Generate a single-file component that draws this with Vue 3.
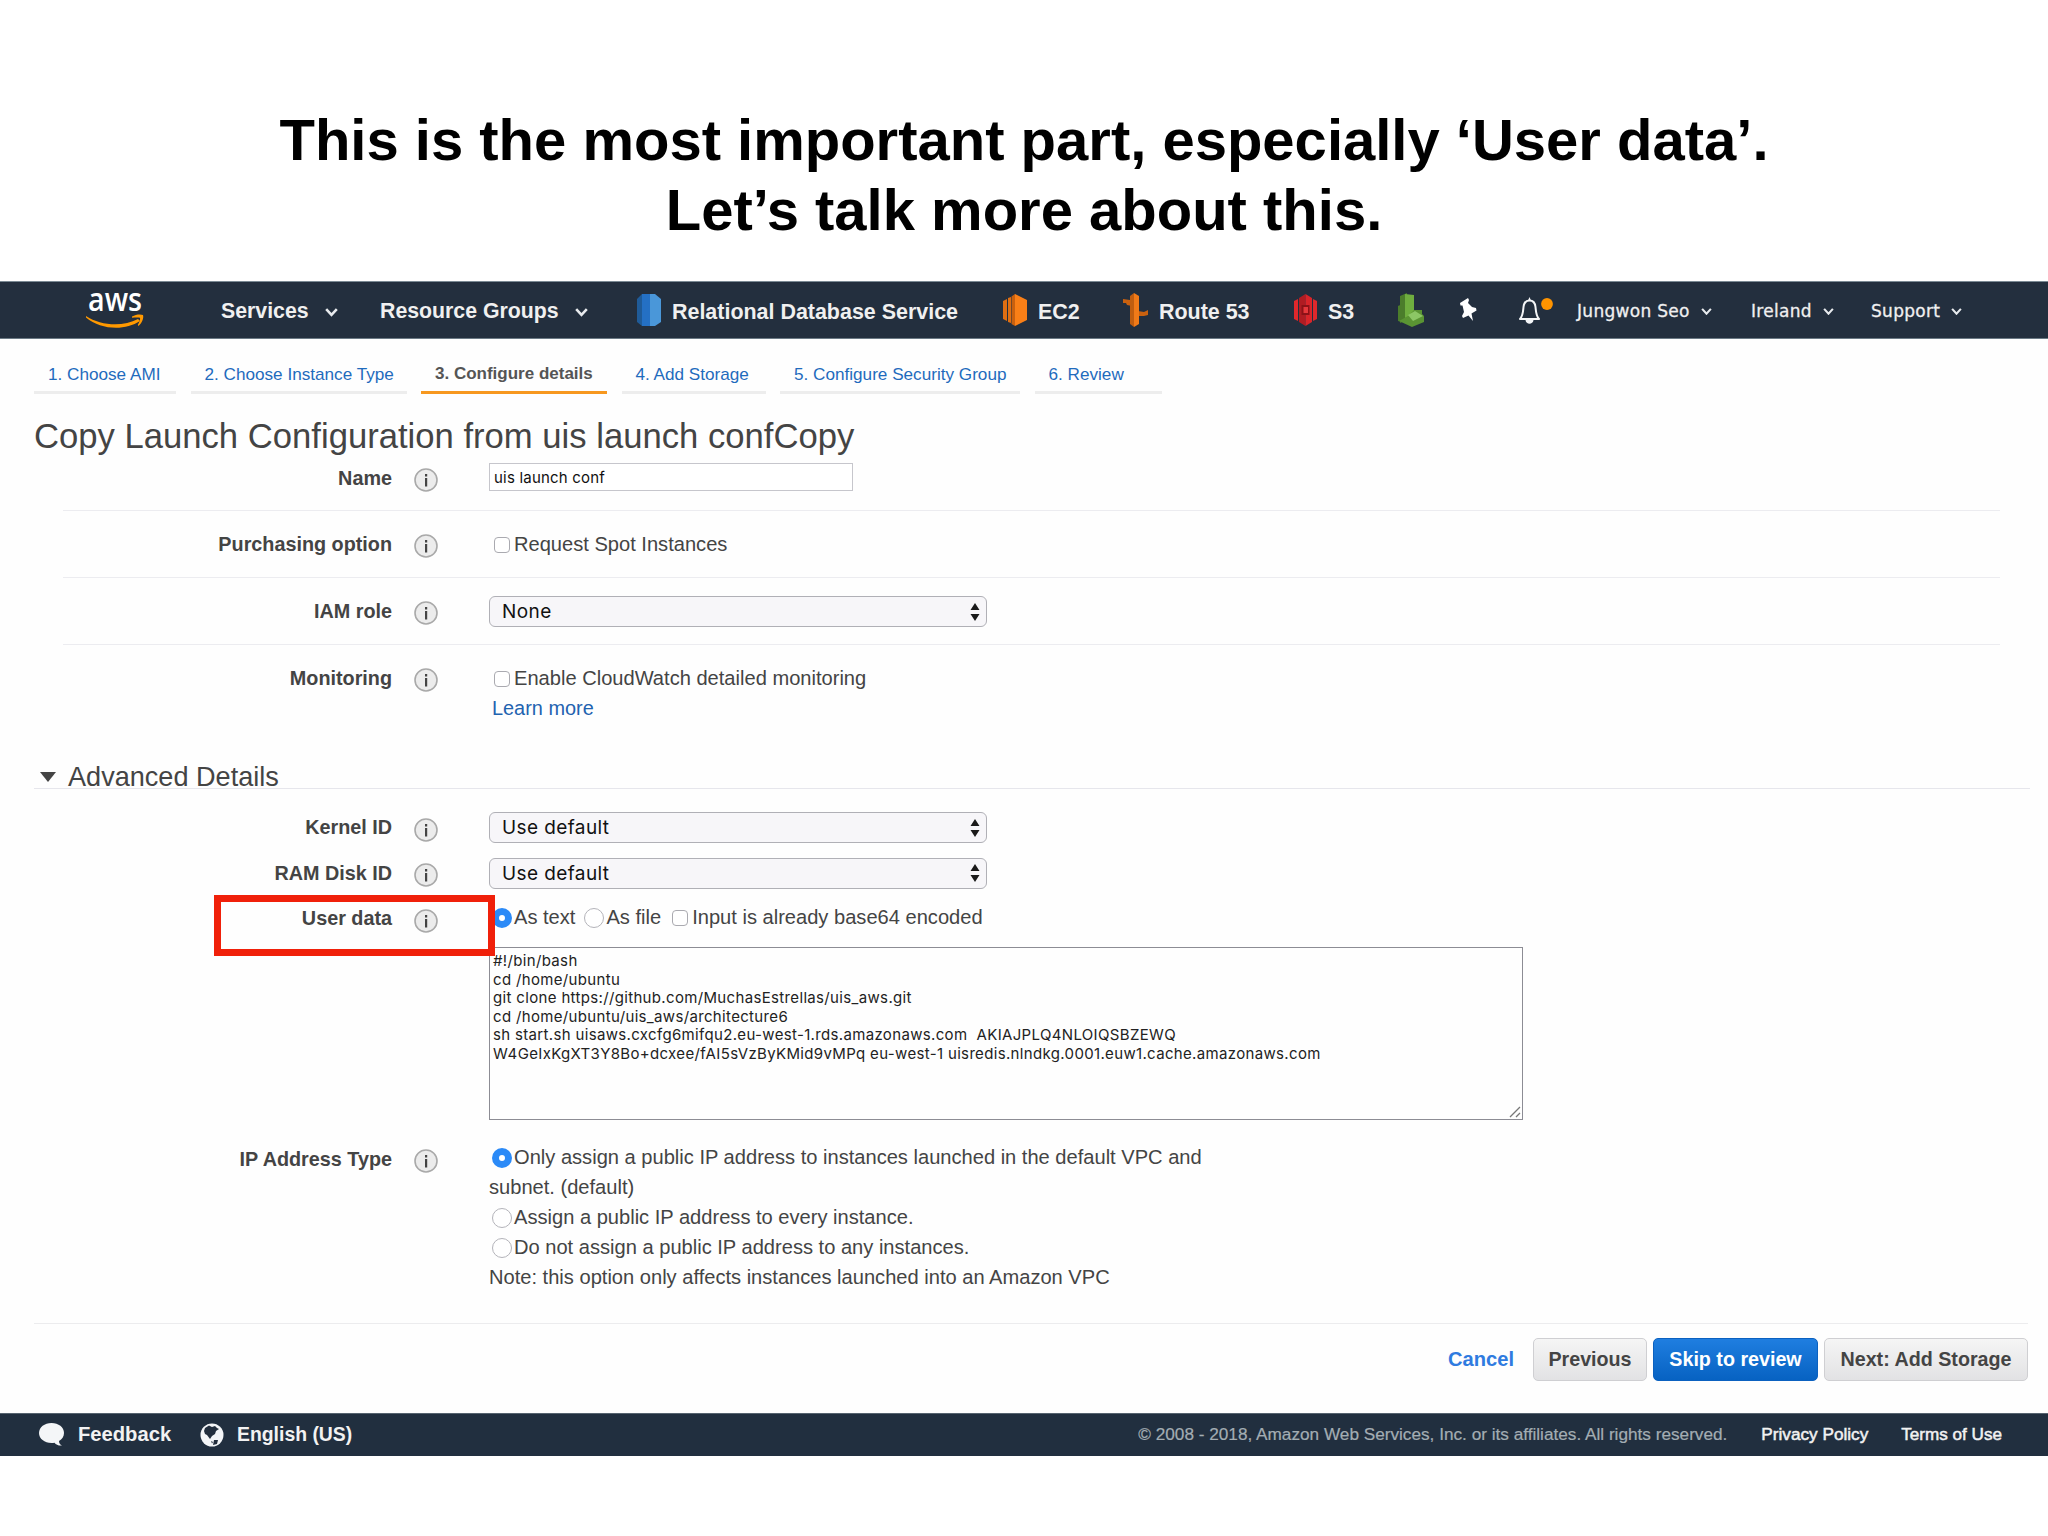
<template>
  <div class="slide">
    <h1 class="slide-title">This is the most important part, especially ‘User data’.<br />Let’s talk more about this.</h1>

    <header class="nav">
      <svg class="logo" viewBox="0 0 62 48" width="62" height="48">
        <text x="3" y="28.5" textLength="54" lengthAdjust="spacingAndGlyphs" class="logo-text">aws</text>
        <path d="M1 34 C16 44 38 45 53 37 L55 39 C40 49 16 48 1 35.5 Z" fill="#ff9900" />
        <path d="M47 34.500 C51 32 56 32 58 33 C59 36 57 41 53.500 44 L52.800 43 C54.500 40 55.500 37 55 35.800 C53 35.200 50 35.600 47 35.800 Z" fill="#ff9900" />
      </svg>
      <div class="nav-item">Services<Caret class="caret" /></div>
      <div class="nav-item">Resource Groups<Caret class="caret" /></div>
      <div class="nav-item shortcut">
        <svg viewBox="0 0 24 34" width="24" height="34">
          <path d="M0 6 L5 1 V33 L0 29 Z" fill="#1f5b98" />
          <path d="M5 1 H13 V33 H5 Z" fill="#2470c4" />
          <path d="M13 1 H18 L24 6 V29 L18 33 H13 Z" fill="#4a97d9" />
        </svg>
        Relational Database Service
      </div>
      <div class="nav-item shortcut">
        <svg viewBox="0 0 24 32" width="24" height="32">
          <path d="M0 7 L4 5 V27 L0 25 Z M5 4 L8 3 V29 L5 28 Z" fill="#e06f12" />
          <path d="M8.500 2.500 L12 0 V32 L8.500 30 Z" fill="#c9600e" />
          <path d="M12 0 L24 6 V26 L12 32 Z" fill="#f97f17" />
        </svg>
        EC2
      </div>
      <div class="nav-item shortcut">
        <svg viewBox="0 0 25 34" width="25" height="34">
          <path d="M0 6 L7 7 L9 13 L4 12 L3 10 L0 10 Z M15 18 L21 19 L25 17 V22 L21 23 H15 Z" fill="#c9610f" />
          <path d="M7 3 L11 0 V34 L7 31 V16 Z" fill="#c05e10" />
          <path d="M11 0 L16 3 V31 L11 34 Z" fill="#f07a18" />
        </svg>
        Route 53
      </div>
      <div class="nav-item shortcut">
        <svg viewBox="0 0 23 32" width="23" height="32">
          <path d="M0 7 L4 5 V27 L0 25 Z M19 5 L23 7 V25 L19 27 Z" fill="#e0282c" />
          <path d="M5 4 L11.500 0 V32 L5 28 Z" fill="#b01c22" />
          <path d="M11.500 0 L18 4 V28 L11.500 32 Z" fill="#d9252a" />
          <path d="M7.500 11 H15.500 V21 H7.500 Z" fill="#8c1217" />
          <path d="M9.500 13 H14 V19 H9.500 Z" fill="#e5383b" />
        </svg>
        S3
      </div>
      <div class="nav-item">
        <svg class="green" viewBox="0 0 26 34" width="26" height="34">
          <path d="M2 3 L9 0 V27 L2 30 Z M0 13 L4 11 V29 L0 28 Z" fill="#4b7d2b" />
          <path d="M7 1 L16 2 V22 L7 25 Z" fill="#6fae3f" />
          <path d="M16 17 L24 17 V21 L26 23 V29 L14 34 L1 28 L10 23 Z" fill="#5a9433" />
          <path d="M10 22 L17 18 L25 23 L15 28 Z" fill="#8cc665" />
        </svg>
      </div>
      <div class="nav-item">
        <svg class="pin" viewBox="0 0 18 24" width="18" height="24">
          <path d="M1 5 L9 0 L10 2 L9 5 L13 9 L17 10 L17.500 12.500 L12.500 15.500 L14 23 L9.500 17.500 L4 20 L3 18 L5 14 L3.500 7.500 L1.500 7.500 Z" fill="#fff" />
        </svg>
      </div>
      <div class="nav-item">
        <svg class="bell" viewBox="0 0 36 28" width="36" height="28">
          <path d="M2 22 C5 19 5 15 5.500 10 C6 5 8.500 3.500 11.500 3.500 C14.500 3.500 17 5 17.500 10 C18 15 18 19 21 22 Z" fill="none" stroke="#f4f6f8" stroke-width="2" stroke-linejoin="round" />
          <path d="M10 3.500 L11.500 0 L13 3.500 Z M7.500 23 H15.500 C15 28 8 28 7.500 23 Z" fill="#f4f6f8" />
          <circle cx="29" cy="7" r="5.900" fill="#ff9400" />
        </svg>
      </div>
      <div class="nav-item account">Jungwon Seo<Caret class="caret" /></div>
      <div class="nav-item account">Ireland<Caret class="caret" /></div>
      <div class="nav-item account">Support<Caret class="caret" /></div>
    </header>

    <main class="page">
      <nav class="tabs">
        <a v-for="tab in tabs" :key="tab" class="tab" :class="{ active: tab === activeTab }">{{ tab }}</a>
      </nav>

      <h2 class="heading">Copy Launch Configuration from uis launch confCopy</h2>

      <section class="basic">
        <div class="row name-row">
          <label class="label">Name</label>
          <InfoIcon class="info" />
          <div class="control"><div class="text-input">uis launch conf</div></div>
        </div>
        <div class="row">
          <label class="label">Purchasing option</label>
          <InfoIcon class="info" />
          <div class="control line"><span class="checkbox"></span>Request Spot Instances</div>
        </div>
        <div class="row">
          <label class="label">IAM role</label>
          <InfoIcon class="info" />
          <div class="control"><div class="select">None<Arrows class="arrows" /></div></div>
        </div>
        <div class="row last">
          <label class="label">Monitoring</label>
          <InfoIcon class="info" />
          <div class="control">
            <div class="line"><span class="checkbox"></span>Enable CloudWatch detailed monitoring</div>
            <a class="learn">Learn more</a>
          </div>
        </div>
      </section>

      <h3 class="advanced-title"><span class="triangle"></span>Advanced Details</h3>

      <section class="advanced">
        <div v-for="name in ['Kernel ID', 'RAM Disk ID']" :key="name" class="row">
          <label class="label">{{ name }}</label>
          <InfoIcon class="info" />
          <div class="control"><div class="select">Use default<Arrows class="arrows" /></div></div>
        </div>
        <div class="row user-row">
          <label class="label">User data</label>
          <InfoIcon class="info" />
          <div class="control">
            <div class="line user-choices">
              <span class="radio checked"></span><span class="choice">As text</span>
              <span class="radio"></span><span class="choice">As file</span>
              <span class="checkbox"></span>Input is already base64 encoded
            </div>
            <div class="textarea">
              <div v-for="line in userData" :key="line" class="code">{{ line }}</div>
              <svg class="grip" viewBox="0 0 12 12" width="12" height="12">
                <path d="M1 11 L11 1 M7 11 L11 7" stroke="#777" stroke-width="1.300" />
              </svg>
            </div>
          </div>
          <div class="highlight"></div>
        </div>
        <div class="row ip-row">
          <label class="label">IP Address Type</label>
          <InfoIcon class="info" />
          <div class="control options">
            <div class="line"><span class="radio checked"></span>Only assign a public IP address to instances launched in the default VPC and</div>
            <div class="line">subnet. (default)</div>
            <div class="line"><span class="radio"></span>Assign a public IP address to every instance.</div>
            <div class="line"><span class="radio"></span>Do not assign a public IP address to any instances.</div>
            <div class="line">Note: this option only affects instances launched into an Amazon VPC</div>
          </div>
        </div>
      </section>

      <div class="actions">
        <a class="cancel">Cancel</a>
        <button class="btn previous">Previous</button>
        <button class="btn primary">Skip to review</button>
        <button class="btn next">Next: Add Storage</button>
      </div>
    </main>

    <footer class="footer">
      <svg class="bubble" viewBox="0 0 25 23" width="25" height="23">
        <path d="M12.500 0 C19.500 0 25 4.300 25 10 C25 13.500 23 16.500 20 18 C20 20 21 21.500 23 22.500 C19.500 22.800 17 21.500 15.500 19.700 C7 21 0 16.500 0 10 C0 4.300 5.500 0 12.500 0 Z" fill="#f4f6f8" />
      </svg>
      <span class="feedback">Feedback</span>
      <svg class="globe" viewBox="0 0 24 24" width="24" height="24">
        <circle cx="12" cy="12" r="11.500" fill="#f4f6f8" />
        <path d="M5 5 L9 2.500 L12 4 L15 3 L17 5 L19 6 L16 8 L15 11 L12 13 L10 16 L7 12 L5 11 L4 8 Z M14 17 L18 17 L17 21 L13 22 Z M11 18 L13 19 L12 20.500 Z" fill="#232f3e" />
      </svg>
      <span class="language">English (US)</span>
      <span class="copyright">© 2008 - 2018, Amazon Web Services, Inc. or its affiliates. All rights reserved.</span>
      <a class="privacy">Privacy Policy</a>
      <a class="terms">Terms of Use</a>
    </footer>
  </div>
</template>

<script setup>
import { h } from 'vue'

const activeTab = '3. Configure details'
const tabs = [
  '1. Choose AMI',
  '2. Choose Instance Type',
  activeTab,
  '4. Add Storage',
  '5. Configure Security Group',
  '6. Review'
]

const userData = [
  '#!/bin/bash',
  'cd /home/ubuntu',
  'git clone https://github.com/MuchasEstrellas/uis_aws.git',
  'cd /home/ubuntu/uis_aws/architecture6',
  'sh start.sh uisaws.cxcfg6mifqu2.eu-west-1.rds.amazonaws.com  AKIAJPLQ4NLOIQSBZEWQ',
  'W4GeIxKgXT3Y8Bo+dcxee/fAI5sVzByKMid9vMPq eu-west-1 uisredis.nlndkg.0001.euw1.cache.amazonaws.com'
]

const Caret = () => h('svg', { viewBox: '0 0 12 8' }, [
  h('path', { d: 'M1 1 L6 6.500 L11 1', fill: 'none', stroke: '#e8ebee', 'stroke-width': 2.4 })
])

const Arrows = () => h('svg', { viewBox: '0 0 10 18' }, [
  h('path', { d: 'M5 0 L9.500 7 H0.500 Z M5 18 L0.500 11 H9.500 Z', fill: '#1a1a1a' })
])

const InfoIcon = () => h('svg', { viewBox: '0 0 24 24' }, [
  h('circle', { cx: 12, cy: 12, r: 11, fill: '#ececec', stroke: '#a9a9a9', 'stroke-width': 1.6 }),
  h('path', { d: 'M11 6 H13.200 V8.500 H11 Z M11 10 H13.200 V18.500 H11 Z', fill: '#444' })
])
</script>

<style>
body { margin: 0; background: #fff; }
</style>

<style scoped>
.slide { width: 2048px; height: 1536px; overflow: hidden; font-family: "Liberation Sans", Arial, sans-serif; font-size: 20.1px; color: #444; }
.slide-title { margin: 0; padding-top: 105px; height: 176px; font-size: 58px; line-height: 70px; font-weight: bold; text-align: center; color: #000; }

.nav {
  display: grid;
  grid-template-columns: 136px 159px 257px 366px 120px 171px 104px 61px 59px 59px 174px 120px 1fr;
  box-sizing: border-box;
  height: 58px;
  padding-left: 85px;
  background: #232f3e;
  border-top: 1px solid #7b8a94;
  border-bottom: 1px solid #6b7a85;
}
.logo { overflow: visible; }
.logo-text { font-family: "Open Sans", sans-serif; font-size: 32px; font-weight: 600; fill: #fff; }
.nav-item { display: flex; align-items: center; height: 58px; font-size: 21.3px; font-weight: bold; color: #f0f0f0; white-space: nowrap; }
.nav-item .caret { width: 13px; height: 8.500px; margin-left: 16px; margin-top: 3px; }
.shortcut { height: 61px; font-size: 21.45px; }
.shortcut svg { margin-right: 11px; margin-top: -5px; }
.green { margin-top: -3px; }
.pin { margin-top: -3px; }
.bell { margin-top: -1px; }
.account { height: 58px; font-family: "DejaVu Sans", Verdana, sans-serif; font-size: 17px; font-weight: normal; letter-spacing: 0.3px; -webkit-text-stroke: 0.3px #f0f0f0; }
.account .caret { width: 11px; height: 7px; margin-left: 11px; margin-top: 1px; }

.page { background: #fefefe; height: 1074px; overflow: hidden; }
.tabs { display: grid; grid-template-columns: 142px 216px 186px 144px 240px 127px; column-gap: 14.500px; margin: 18px 0 0 34px; }
.tab { padding-left: 14px; line-height: 34px; font-size: 17.15px; color: #1f6bbd; border-bottom: 3px solid #ededed; white-space: nowrap; }
.tab.active { font-size: 17px; color: #555; font-weight: bold; border-color: #f7981f; }

.heading { margin: 22px 0 0 34px; font-size: 34.65px; line-height: 40px; font-weight: normal; }

.row { position: relative; display: grid; grid-template-columns: 329px 97px 1fr; box-sizing: border-box; }
.basic { margin: 0 48px 0 63px; }
.basic .row { height: 67px; padding-top: 18px; border-bottom: 1.500px solid #ececf0; }
.basic .name-row { height: 55px; padding-top: 7px; }
.basic .last { height: 119px; border-bottom: 0; }
.label { font-size: 19.8px; font-weight: bold; line-height: 30px; text-align: right; white-space: nowrap; }
.info { width: 24px; height: 24px; margin: 5px 0 0 22px; }
.line { display: flex; align-items: center; height: 30px; white-space: nowrap; }
.learn { display: block; padding-left: 3px; font-size: 19.9px; line-height: 30px; color: #1f63b0; }

.text-input { box-sizing: border-box; width: 364px; height: 28px; padding-left: 4px; border: 1.500px solid #c6c6cc; background: #fff; font-family: Inter, sans-serif; font-size: 15px; letter-spacing: 0.2px; line-height: 27px; color: #111; }
.select { display: flex; align-items: center; justify-content: space-between; box-sizing: border-box; width: 498px; height: 31px; padding: 0 6px 0 12px; border: 1.500px solid #b0b0b6; border-radius: 6px; background: #f7f6f9; font-family: Inter, sans-serif; font-size: 19px; letter-spacing: 0.4px; color: #111; }
.arrows { width: 10px; height: 18px; }

.checkbox { box-sizing: border-box; width: 16px; height: 16px; margin: 2px 4px 0 5px; border: 1.500px solid #aaaab0; border-radius: 4px; background: #fff; }
.radio { box-sizing: border-box; width: 20px; height: 20px; margin: 1px 2px 0 3px; border: 1.500px solid #b4b4ba; border-radius: 50%; background: #fff; }
.radio.checked { border: 7px solid #2b8af7; }
.choice { margin-right: 6px; }

.advanced-title { display: flex; align-items: center; margin: 0 18px 0 34px; height: 25px; border-bottom: 1px solid #e6e6ec; font-size: 27.1px; line-height: 27px; font-weight: normal; padding-top: 1px; box-sizing: border-box; }
.triangle { margin: 0 12px 0 6px; border: 8px solid transparent; border-top: 10px solid #444; border-bottom: 0; }
.advanced { margin: 23px 48px 0 63px; }
.advanced .row { height: 45.5px; }
.advanced .info { margin-top: 5.500px; }
.advanced .user-row { height: 239px; }
.user-choices { margin-top: -1px; }
.textarea { position: relative; box-sizing: border-box; width: 1034px; height: 173px; margin-top: 15px; padding: 4px 3px; border: 1.500px solid #8c8c94; background: #fefefe; }
.code { font-family: Inter, sans-serif; font-size: 15px; letter-spacing: 0.34px; line-height: 18.5px; color: #222; white-space: pre; }
.grip { position: absolute; right: 1px; bottom: 1px; }
.highlight { position: absolute; left: 151px; top: -8px; box-sizing: border-box; width: 281px; height: 61px; border: 7.500px solid #f0200a; }
.advanced .ip-row { height: 181px; padding-top: 1px; }
.ip-row .label { line-height: 32px; }
.advanced .ip-row .info { margin-top: 6px; }
.options .line { height: 29.8px; }

.actions { display: flex; align-items: center; justify-content: flex-end; margin: 0 20px 0 34px; padding-top: 14px; border-top: 1.500px solid #ececee; }
.cancel { margin-right: 19px; font-size: 20.1px; font-weight: bold; color: #2f7be0; }
.btn { box-sizing: border-box; height: 43px; padding: 0; margin-left: 6px; border: 1.500px solid #cfcfd2; border-radius: 5px; background: linear-gradient(#f5f5f5, #e2e2e4); font-family: inherit; font-size: 19.7px; font-weight: bold; color: #444; white-space: nowrap; }
.previous { width: 114px; margin-left: 0; }
.primary { width: 165px; border-color: #0b61c0; background: linear-gradient(#1f7ee0, #0762c2); color: #fff; }
.next { width: 204px; }

.footer { display: flex; align-items: center; box-sizing: border-box; height: 43px; padding: 0 46px 1px 39px; background: #212f3f; border-top: 1px solid #56636f; color: #f2f2f2; font-weight: bold; white-space: nowrap; }
.feedback { width: 109px; margin-left: 14px; font-size: 20.2px; }
.globe { margin-left: 13px; }
.language { margin-left: 13px; font-size: 19.4px; }
.copyright { margin-left: auto; font-size: 17.2px; font-weight: normal; color: #a3adb3; -webkit-text-stroke: 0.2px #a3adb3; }
.privacy { margin-left: 34px; font-size: 17.2px; font-weight: normal; -webkit-text-stroke: 0.5px #f2f2f2; }
.terms { margin-left: 33px; font-size: 17.1px; font-weight: normal; -webkit-text-stroke: 0.5px #f2f2f2; }
</style>
